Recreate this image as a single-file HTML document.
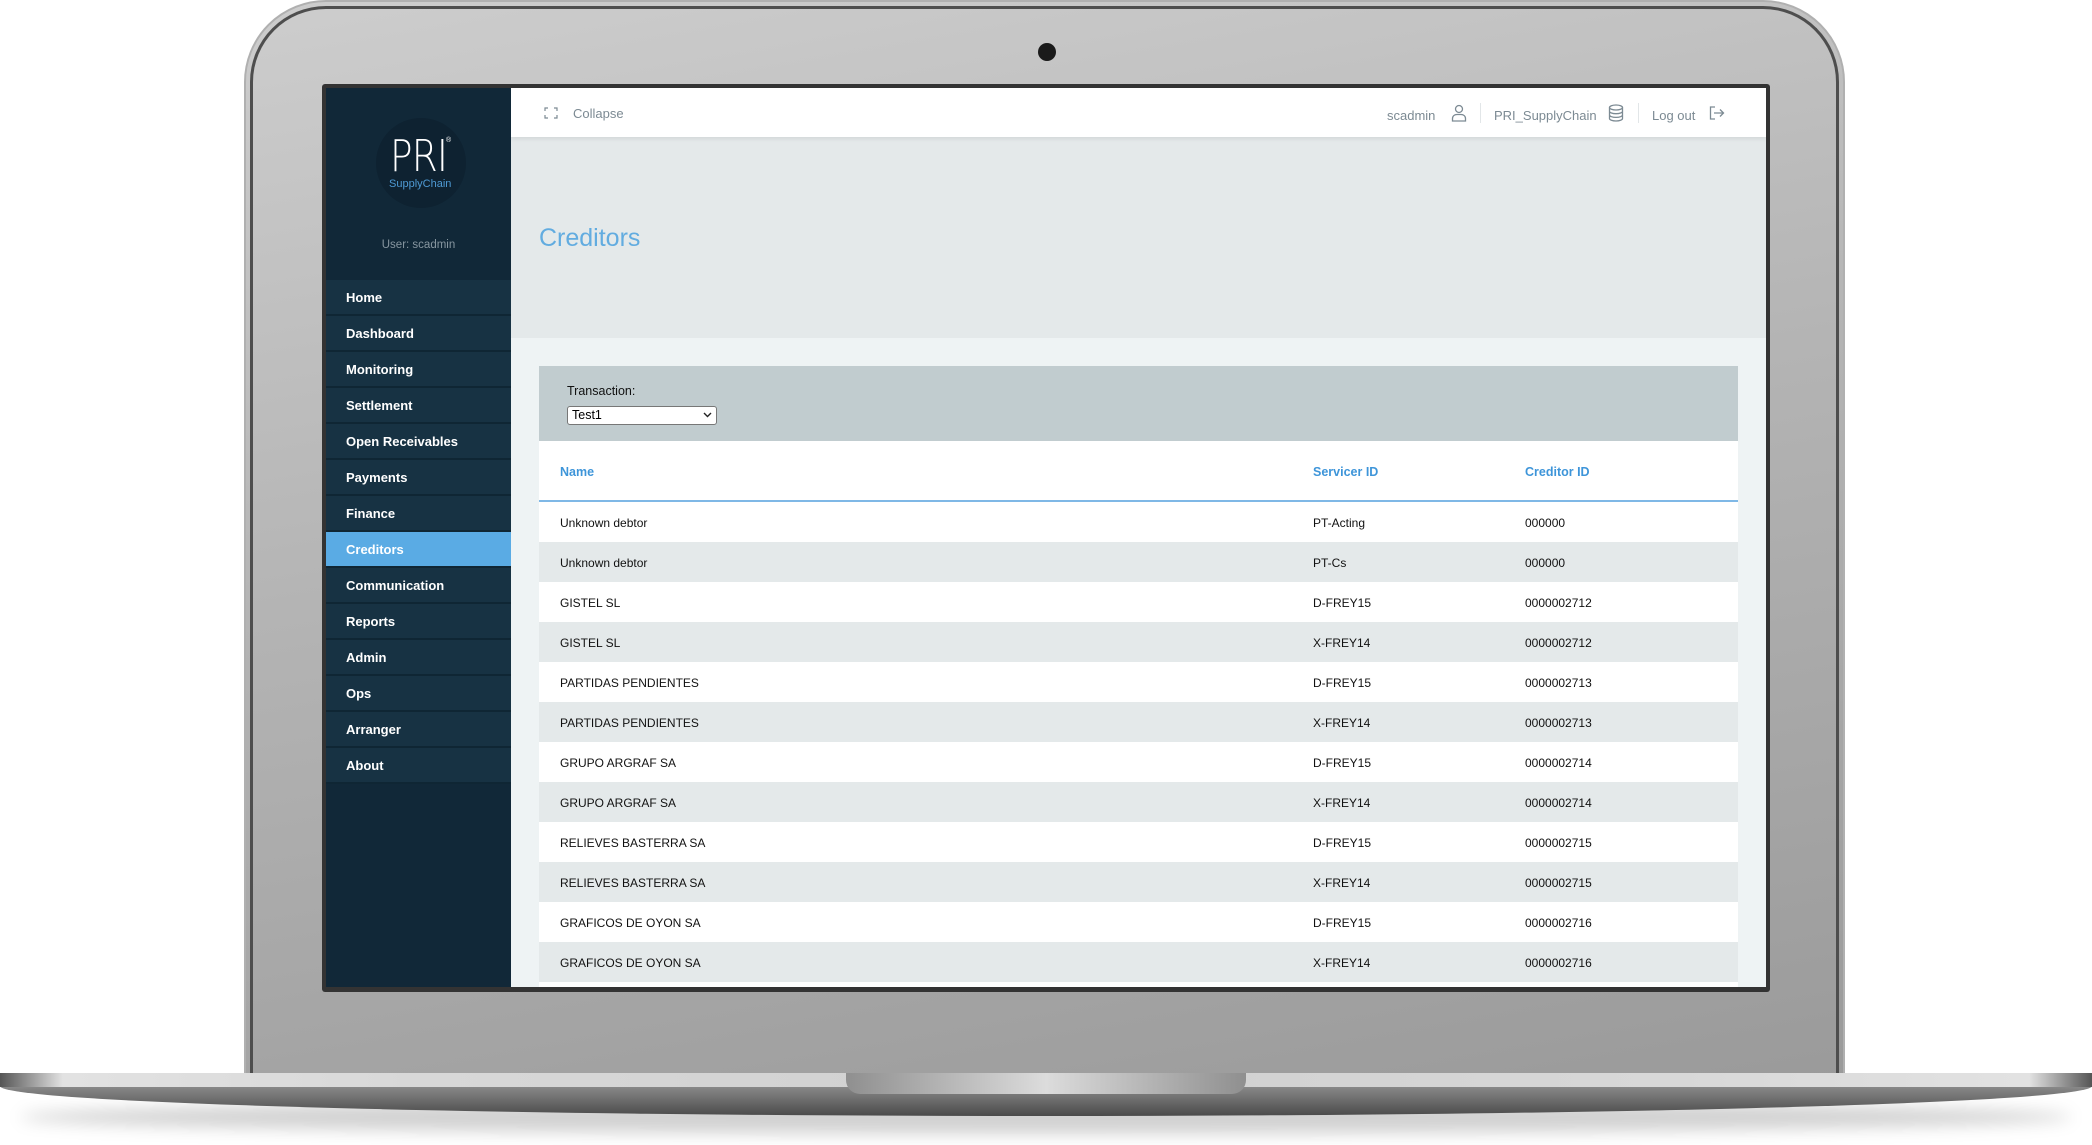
<!DOCTYPE html>
<html><head><meta charset="utf-8"><style>
*{margin:0;padding:0;box-sizing:border-box}
body{width:2092px;height:1145px;background:#fff;position:relative;overflow:hidden;font-family:"Liberation Sans",sans-serif}
.abs{position:absolute}
#lid{left:244px;top:0;width:1601px;height:1090px;border-radius:82px 82px 0 0;background:linear-gradient(170deg,#cdcdcd 0%,#b4b4b4 45%,#9a9a9a 100%);border:2px solid #b0b0b0}
#lidin{left:250px;top:6px;width:1589px;height:1090px;border-radius:76px 76px 0 0;border:3px solid #4e4e4e;border-bottom:none}
#cam{left:1038px;top:43px;width:18px;height:18px;border-radius:50%;background:#1a1a1a}
#bezel{left:322px;top:84px;width:1448px;height:908px;background:#333;border-radius:3px}
#side{left:326px;top:88px;width:185px;height:899px;background:#112838}
#main{left:511px;top:88px;width:1255px;height:899px;background:#eef3f4;overflow:hidden}
.logo{left:376px;top:118px;width:90px;height:90px;border-radius:50%;background:#0e2231}
.menu div{height:36px;background:#173243;border-bottom:2px solid #0f2634;color:#fff;font-weight:bold;font-size:13px;padding-left:20px;line-height:36px}
.menu div.act{background:#5aabe4}
#top{left:0;top:0;width:1255px;height:49px;background:#fff;box-shadow:0 2px 4px rgba(0,0,0,.08);color:#7c8a93;font-size:13px}
#hdr{left:0;top:49px;width:1255px;height:201px;background:#e4e9ea}
table{border-collapse:collapse;width:1199px;font-size:12px;color:#111}
td{height:40px;padding:2px 0 0 0}
tr.g td{background:#e4e9ea}
tr.w td{background:#fff}
</style></head><body>
<div id="lid" class="abs"></div>
<div id="lidin" class="abs"></div>
<div id="cam" class="abs"></div>
<div class="abs" style="left:20px;top:1100px;width:2052px;height:34px;border-radius:50%;background:rgba(0,0,0,.18);filter:blur(8px)"></div>
<div class="abs" style="left:0;top:1086px;width:2092px;height:30px;background:linear-gradient(#8a8a8a,#4a4a4a);border-radius:0 0 50% 50%/0 0 100% 100%"></div>
<div class="abs" style="left:0;top:1073px;width:2092px;height:14px;background:linear-gradient(90deg,#555 0%,#e2e2e2 3%,#d8d8d8 20%,#d0d0d0 50%,#d8d8d8 80%,#e2e2e2 97%,#555 100%)"></div>
<div class="abs" style="left:846px;top:1073px;width:400px;height:21px;border-radius:0 0 14px 14px;background:linear-gradient(90deg,#8f8f8f,#dcdcdc 50%,#8f8f8f)"></div>

<div id="bezel" class="abs"></div>
<div id="side" class="abs"></div>
<div class="abs logo"></div>
<div class="abs" style="left:390px;top:131px;color:#fff;font-size:44px;font-weight:100;letter-spacing:-1px;font-family:'DejaVu Sans',sans-serif;transform:scaleX(.85);transform-origin:left">PRI</div>
<div class="abs" style="left:446px;top:137px;color:#fff;font-size:7px">®</div>
<div class="abs" style="left:389px;top:178px;color:#4e9ad4;font-size:11px">SupplyChain</div>
<div class="abs" style="left:326px;top:239px;width:185px;text-align:center;color:#8796a0;font-size:11.5px">User: scadmin</div>
<div class="abs menu" style="left:326px;top:280px;width:185px">
<div>Home</div><div>Dashboard</div><div>Monitoring</div><div>Settlement</div><div>Open Receivables</div><div>Payments</div><div>Finance</div><div class="act">Creditors</div><div>Communication</div><div>Reports</div><div>Admin</div><div>Ops</div><div>Arranger</div><div>About</div>
</div>

<div id="main" class="abs">
 <div id="hdr" class="abs"></div>
 <div id="top" class="abs">
  <svg class="abs" style="left:33px;top:19px" width="14" height="12" viewBox="0 0 14 12" fill="none" stroke="#7c8a93" stroke-width="1.2"><path d="M4 1H1v3M1 8v3h3M10 1h3v3M13 8v3h-3"/></svg>
  <div class="abs" style="left:62px;top:18px">Collapse</div>
  <div class="abs" style="left:876px;top:20px">scadmin</div>
  <svg class="abs" style="left:940px;top:16px" width="16" height="18" viewBox="0 0 16 18" fill="none" stroke="#7c8a93" stroke-width="1.3"><circle cx="8" cy="5" r="3.5"/><path d="M1.5 17v-2.5c0-2.5 2-4 4.5-4h4c2.5 0 4.5 1.5 4.5 4V17z"/></svg>
  <div class="abs" style="left:969px;top:15px;width:1px;height:20px;background:#e2e6e8"></div>
  <div class="abs" style="left:983px;top:20px">PRI_SupplyChain</div>
  <svg class="abs" style="left:1097px;top:16px" width="16" height="18" viewBox="0 0 16 18" fill="none" stroke="#7c8a93" stroke-width="1.3"><ellipse cx="8" cy="3.5" rx="6.5" ry="2.5"/><path d="M1.5 3.5v11c0 1.4 2.9 2.5 6.5 2.5s6.5-1.1 6.5-2.5v-11M1.5 7.2c0 1.4 2.9 2.5 6.5 2.5s6.5-1.1 6.5-2.5M1.5 10.9c0 1.4 2.9 2.5 6.5 2.5s6.5-1.1 6.5-2.5"/></svg>
  <div class="abs" style="left:1127px;top:15px;width:1px;height:20px;background:#e2e6e8"></div>
  <div class="abs" style="left:1141px;top:20px">Log out</div>
  <svg class="abs" style="left:1198px;top:18px" width="16" height="14" viewBox="0 0 16 14" fill="none" stroke="#7c8a93" stroke-width="1.3"><path d="M6 1H1.5v12H6M5 7h9.5M11 3.5 14.5 7 11 10.5"/></svg>
 </div>
 <div class="abs" style="left:28px;top:136px;color:#62ace0;font-size:25px;font-weight:300">Creditors</div>
 <div class="abs" style="left:28px;top:278px;width:1199px;height:75px;background:#c1cccf">
  <div class="abs" style="left:28px;top:18px;font-size:12.5px;color:#111">Transaction:</div>
  <div class="abs" style="left:28px;top:40px;width:150px;height:19px;background:#fff;border:1px solid #777;border-radius:3px;font-size:12.5px;line-height:17px;padding-left:4px;color:#000">Test1
   <svg class="abs" style="right:4px;top:5px" width="9" height="6" viewBox="0 0 9 6" fill="none" stroke="#222" stroke-width="1.4"><path d="M1 1l3.5 3.5L8 1"/></svg></div>
 </div>
 <div class="abs" style="left:28px;top:353px;width:1199px;height:61px;background:#fff;border-bottom:2px solid #7fb8e6;color:#3e95d9;font-weight:bold;font-size:12.5px">
  <div class="abs" style="left:21px;top:24px">Name</div>
  <div class="abs" style="left:774px;top:24px">Servicer ID</div>
  <div class="abs" style="left:986px;top:24px">Creditor ID</div>
 </div>
 <table class="abs" style="left:28px;top:414px">
 <colgroup><col style="width:774px"><col style="width:212px"><col></colgroup>
 <tr class="w"><td style="padding-left:21px">Unknown debtor</td><td>PT-Acting</td><td>000000</td></tr>
 <tr class="g"><td style="padding-left:21px">Unknown debtor</td><td>PT-Cs</td><td>000000</td></tr>
 <tr class="w"><td style="padding-left:21px">GISTEL SL</td><td>D-FREY15</td><td>0000002712</td></tr>
 <tr class="g"><td style="padding-left:21px">GISTEL SL</td><td>X-FREY14</td><td>0000002712</td></tr>
 <tr class="w"><td style="padding-left:21px">PARTIDAS PENDIENTES</td><td>D-FREY15</td><td>0000002713</td></tr>
 <tr class="g"><td style="padding-left:21px">PARTIDAS PENDIENTES</td><td>X-FREY14</td><td>0000002713</td></tr>
 <tr class="w"><td style="padding-left:21px">GRUPO ARGRAF SA</td><td>D-FREY15</td><td>0000002714</td></tr>
 <tr class="g"><td style="padding-left:21px">GRUPO ARGRAF SA</td><td>X-FREY14</td><td>0000002714</td></tr>
 <tr class="w"><td style="padding-left:21px">RELIEVES BASTERRA SA</td><td>D-FREY15</td><td>0000002715</td></tr>
 <tr class="g"><td style="padding-left:21px">RELIEVES BASTERRA SA</td><td>X-FREY14</td><td>0000002715</td></tr>
 <tr class="w"><td style="padding-left:21px">GRAFICOS DE OYON SA</td><td>D-FREY15</td><td>0000002716</td></tr>
 <tr class="g"><td style="padding-left:21px">GRAFICOS DE OYON SA</td><td>X-FREY14</td><td>0000002716</td></tr>
 <tr class="w"><td style="padding-left:21px"></td><td></td><td></td></tr>
 </table>
</div>
</body></html>
